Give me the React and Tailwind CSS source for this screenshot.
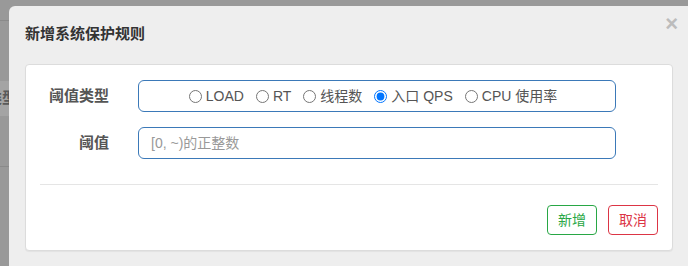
import React from "react";

const font = "font-['Liberation_Sans','Noto_Sans_CJK_SC',sans-serif]";

function Radio({ label, checked }) {
  return (
    <label className="flex items-center gap-[4px]">
      <input
        type="radio"
        name="grade"
        checked={checked}
        readOnly
        className="m-0 h-[13px] w-[13px] accent-[#0075ff]"
      />
      <span>{label}</span>
    </label>
  );
}

export default function App() {
  return (
    <div className={`flex h-[266px] w-[688px] overflow-hidden bg-[#999] ${font}`}>
      {/* underlying page sliver */}
      <div className="flex w-[9px] flex-col">
        <div className="h-[20px]" />
        <div className="h-px bg-[#8a8a8a]" />
        <div className="h-[60px]" />
        <div className="flex h-[35px] items-center justify-end overflow-hidden bg-[#a4a4a4]">
          <span className="mr-[-8px] whitespace-nowrap text-[15px] font-bold text-[#5a5a5a]">阈值类型</span>
        </div>
        <div className="h-[50px]" />
        <div className="h-px bg-[#8a8a8a]" />
      </div>

      {/* modal */}
      <div className="mt-[6px] flex flex-1 flex-col rounded-tl-[6px] bg-[#eeeeee]">
        <div className="flex h-[58px] items-start justify-between pl-[16px] pr-[10px]">
          <div className="pt-[18px] text-[15px] font-bold leading-[20px] text-[#333]">新增系统保护规则</div>
          <div className="pt-[7px] text-[22px] font-bold leading-[22px] text-[#bcbcbc]">×</div>
        </div>

        <div className="ml-[16px] mr-[15px] flex h-[187px] flex-col rounded-[4px] border border-[#dcdcdc] bg-white shadow-[0_1px_1px_rgba(0,0,0,0.05)]">
          <div className="mt-[15px] flex items-center">
            <div className="w-[83px] text-right text-[15px] font-bold text-[#555]">阈值类型</div>
            <div className="ml-[29px] flex h-[32px] w-[478px] items-center justify-center gap-[12px] rounded-[6px] border border-[#3b79b8] pr-[8px] text-[14px] text-[#555]">
              <Radio label="LOAD" />
              <Radio label="RT" />
              <Radio label="线程数" />
              <Radio label="入口 QPS" checked />
              <Radio label="CPU 使用率" />
            </div>
          </div>

          <div className="mt-[15px] flex items-center">
            <div className="w-[83px] text-right text-[15px] font-bold text-[#555]">阈值</div>
            <div className="ml-[29px] flex h-[32px] w-[478px] items-center rounded-[6px] border border-[#3b79b8] pl-[12px] text-[14px] text-[#999]">
              [0, ~)的正整数
            </div>
          </div>

          <div className="mx-[14px] mt-[25px] h-px bg-[#e5e5e5]" />

          <div className="mr-[14px] mt-[20px] flex justify-end gap-[11px]">
            <button className="h-[30px] w-[50px] rounded-[4px] border border-[#28a745] bg-white text-[14px] text-[#28a745]">新增</button>
            <button className="h-[30px] w-[50px] rounded-[4px] border border-[#dc3545] bg-white text-[14px] text-[#dc3545]">取消</button>
          </div>
        </div>
      </div>
    </div>
  );
}
